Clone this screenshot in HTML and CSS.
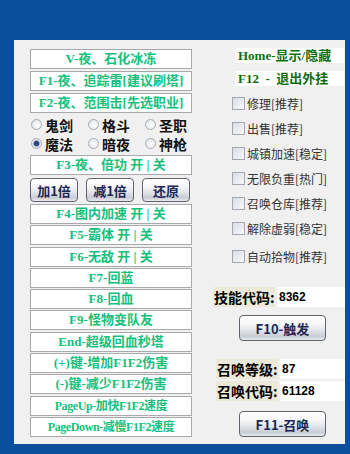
FILE: index.html
```html
<!DOCTYPE html>
<html lang="zh-CN">
<head>
    <meta charset="UTF-8">
    <title>外挂面板</title>
    <link rel="stylesheet" href="styles.css">
</head>
<body>
    <div class="panel">
        <div class="left">
            <div class="stack">
                <div class="key">V-夜、石化冰冻</div>
                <div class="key">F1-夜、追踪雷[建议刷塔]</div>
                <div class="key">F2-夜、范围击[先选职业]</div>
            </div>

            <div class="radios">
                <label class="radio"><input type="radio" name="job">鬼剑</label>
                <label class="radio"><input type="radio" name="job">格斗</label>
                <label class="radio"><input type="radio" name="job">圣职</label>
                <label class="radio"><input type="radio" name="job" checked>魔法</label>
                <label class="radio"><input type="radio" name="job">暗夜</label>
                <label class="radio"><input type="radio" name="job">神枪</label>
            </div>

            <div class="key f3">F3-夜、倍功 开 | 关</div>

            <div class="btn-row">
                <button class="btn">加1倍</button>
                <button class="btn">减1倍</button>
                <button class="btn">还原</button>
            </div>

            <div class="stack lower">
                <div class="key">F4-图内加速 开 | 关</div>
                <div class="key">F5-霸体 开 | 关</div>
                <div class="key">F6-无敌 开 | 关</div>
                <div class="key">F7-回蓝</div>
                <div class="key">F8-回血</div>
                <div class="key">F9-怪物变队友</div>
                <div class="key">End-超级回血秒塔</div>
                <div class="key">(+)键-增加F1F2伤害</div>
                <div class="key">(-)键-减少F1F2伤害</div>
                <div class="key tight">PageUp-加快F1F2速度</div>
                <div class="key tight">PageDown-减慢F1F2速度</div>
            </div>
        </div>

        <div class="right">
            <div class="hotkey">Home-显示/隐藏</div>
            <div class="hotkey">F12  -  退出外挂</div>

            <div class="checks">
                <label class="check"><input type="checkbox">修理[推荐]</label>
                <label class="check"><input type="checkbox">出售[推荐]</label>
                <label class="check"><input type="checkbox">城镇加速[稳定]</label>
                <label class="check"><input type="checkbox">无限负重[热门]</label>
                <label class="check"><input type="checkbox">召唤仓库[推荐]</label>
                <label class="check"><input type="checkbox">解除虚弱[稳定]</label>
                <label class="check last"><input type="checkbox">自动拾物[推荐]</label>
            </div>

            <div class="field">
                <span class="field-label">技能代码:</span>
                <span class="field-value">8362</span>
            </div>
            <button class="btn btn-big">F10-触发</button>

            <div class="field summon">
                <span class="field-label">召唤等级:</span>
                <span class="field-value">87</span>
            </div>
            <div class="field summon second">
                <span class="field-label">召唤代码:</span>
                <span class="field-value">61128</span>
            </div>
            <button class="btn btn-big last">F11-召唤</button>
        </div>
    </div>
</body>
</html>
```

FILE: styles.css
```css
* {
    margin: 0;
    padding: 0;
    box-sizing: border-box;
}

body {
    background-color: #0b4e9b;
    height: 454px;
    overflow: hidden;
    padding: 40px 0 0 14px;
    font-family: "Noto Sans CJK SC", sans-serif;
}

.panel {
    width: 331px;
    height: 404px;
    background: #f0f0f0;
    display: flex;
}

/* coluna esquerda */
.left {
    width: 162px;
    margin-left: 16px;
    padding-top: 9px;
    display: flex;
    flex-direction: column;
}

.stack {
    display: flex;
    flex-direction: column;
    gap: 2px;
}

.stack.lower {
    margin-top: 2px;
    gap: 1.3px;
}

.key {
    height: 20px;
    border: 1px solid #a9a9a9;
    background: #fff;
    color: #16c07c;
    font: bold 13px/18px "Liberation Serif", "Noto Sans CJK SC", serif;
    text-align: center;
    white-space: pre;
    overflow: hidden;
}

.key.tight {
    font-size: 12px;
    letter-spacing: -0.4px;
}

.key.f3 {
    margin-top: 2px;
}

.radios {
    margin-top: 2px;
    display: grid;
    grid-template-columns: 57px 57px 48px;
    grid-auto-rows: 19px;
}

.radio {
    display: flex;
    align-items: center;
    gap: 3px;
    padding-left: 1px;
    font-size: 14px;
    font-weight: bold;
    color: #111;
}

.radio input {
    appearance: none;
    width: 11px;
    height: 11px;
    border: 1px solid #a7acb4;
    border-radius: 50%;
    background: radial-gradient(circle at 60% 60%, #ffffff, #dadde3);
}

.radio input:checked {
    background: radial-gradient(circle, #1d3677 0, #3a5597 2.5px, #dfe2e8 3.5px, #f4f5f7 5px);
}

.btn-row {
    margin-top: 3px;
    height: 24px;
    display: flex;
    gap: 8px;
}

.btn {
    border: 1px solid #5f646e;
    border-radius: 4px;
    background: linear-gradient(#ffffff 0%, #f6f6f7 35%, #e2e4e8 60%, #c8ccd3 85%, #e9ebee 100%);
    color: #1b2757;
    font: bold 13px "Noto Sans CJK SC", sans-serif;
    cursor: pointer;
}

.btn-row .btn {
    width: 48px;
}

/* coluna direita */
.right {
    flex: 1;
    margin-left: 21px;
    padding-top: 8px;
    display: flex;
    flex-direction: column;
}

.hotkey {
    margin-left: 23px;
    width: 108px;
    height: 15px;
    padding-left: 2px;
    background: #fff;
    color: #0f6f0f;
    font: bold 13px/15px "Liberation Serif", "Noto Sans CJK SC", serif;
    white-space: pre;
}

.hotkey + .hotkey {
    margin-top: 8px;
}

.checks {
    margin-top: 5px;
}

.check {
    height: 25px;
    display: flex;
    align-items: center;
    gap: 2px;
    padding-left: 19px;
    font-size: 12px;
    color: #333;
}

.check.last {
    margin-top: 3px;
}

.check input {
    appearance: none;
    width: 13px;
    height: 13px;
    border: 1px solid #a3a8b0;
    background: linear-gradient(135deg, #d9dce2, #f8f9fa);
}

.field {
    margin-top: 18px;
    height: 20px;
    display: flex;
}

.field.summon {
    margin-left: 3px;
}

.field.second {
    margin-top: 2px;
}

.field-label {
    width: 62px;
    background: #ece9d8;
    color: #000;
    font-size: 14px;
    font-weight: bold;
    line-height: 20px;
    padding-left: 1px;
    white-space: nowrap;
}

.field-value {
    flex: 1;
    margin-left: 2px;
    padding-left: 2px;
    background: #fff;
    color: #000;
    font: bold 12px/20px "Liberation Sans", sans-serif;
}

.btn-big {
    margin: 8px 0 0 26px;
    width: 87px;
    height: 26px;
}

.btn-big.last {
    margin-top: 10px;
}
```
